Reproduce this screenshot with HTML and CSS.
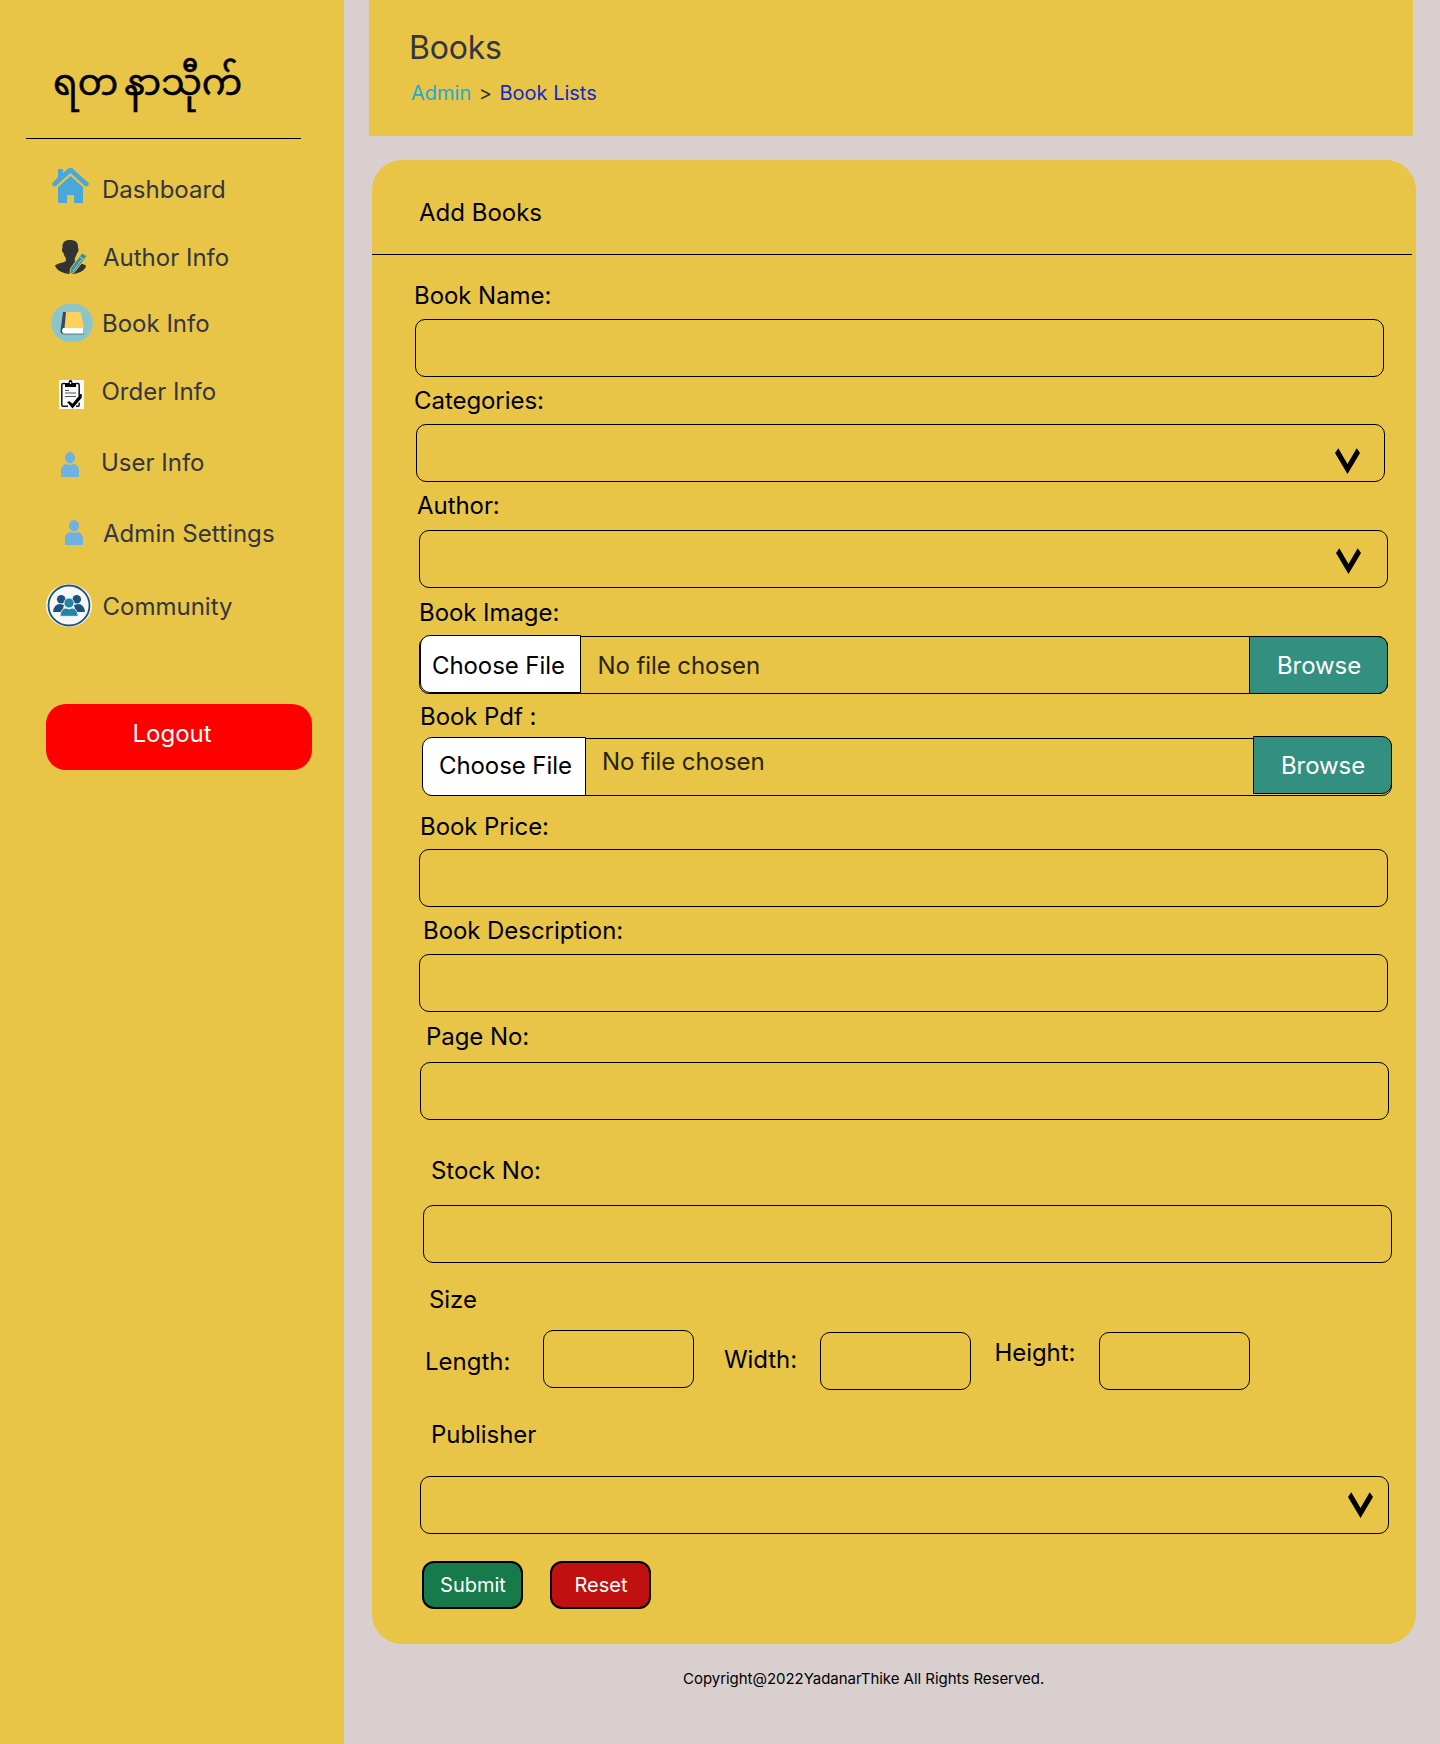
FILE: index.html
```html
<!DOCTYPE html>
<html lang="en">
<head>
<meta charset="utf-8">
<title>Add Books</title>
<link rel="stylesheet" href="styles.css">
</head>
<body>
<div class="page">
  <aside class="sidebar">
    <div class="logo" lang="my"><span>ရတ</span><span>နာသီုက်</span></div>
    <nav class="nav">
      <a class="nav-item dashboard"><svg class="icon" width="37" height="36" viewBox="0 0 37 36"><path fill="#4aa7dc" d="M6 9V2Q6 1 7 1h3q1 0 1 1v3l6-5q1.500-1 3 0l16.500 15q1 1.500-.5 2.500-1.500 1.500-3 .5L18.500 5 4 18q-1.500 1-3-.5-1.500-1-.5-2.500z"/><path fill="#4aa7dc" d="M18.500 8 31 19v15q0 1-1 1h-8v-8h-7v8H7q-1 0-1-1V19z"/></svg><span>Dashboard</span></a>
      <a class="nav-item author"><svg class="icon" width="32" height="34" viewBox="0 0 32 34"><path fill="#333" d="M15 0c6 0 8.500 3 8 8 1 1 .5 4-1 5-.5 2-1.200 4-2.200 5v3c3 2 8 2.500 11.200 4.500 0 4-6 8.500-15 8.500S1 29.500 0 25.500C3 23 8 23 10.800 21v-3c-1-1-1.800-3-2.300-5-1.500-1-2-4-1-5-.5-5 1.500-8 7.500-8z"/><path fill="#2a93b5" stroke="#e8c547" stroke-width="1" d="m27 13 5 3-12 15.500-5 3 .5-6z"/><path stroke="#e8c547" stroke-width="1" fill="none" d="m24.500 16.500 5 3.200M27 19 18 31"/></svg><span>Author Info</span></a>
      <a class="nav-item book"><svg class="icon" width="42" height="38" viewBox="0 0 42 38"><rect width="42" height="38" rx="19" fill="#8bc5cc"/><path fill="#334a5e" d="M12 8h4l-1.500 15L13 30h-2q-1.500-1-1.500-3z"/><path fill="#ffd05b" d="M15 8h13q2 0 2.200 1.500L33 24H13.500z"/><path fill="#fff" d="M12 24h20v6H12q-2-3 0-6z"/><path stroke="#334a5e" stroke-width=".7" fill="none" d="M11 24q-2 3 1 6h21"/></svg><span>Book Info</span></a>
      <a class="nav-item order"><svg class="icon" width="25" height="29" viewBox="0 0 25 29"><path fill="#fafafa" d="M0 0h25v29H0z"/><path fill="none" stroke="#111" stroke-width="1.500" d="M6 3.500H4Q2.800 3.500 2.800 5v20q0 1.300 1.200 1.300h5M17 3.500h2q1.200 0 1.200 1.500v11M17 26.300h2q1.200 0 1.200-1.500v-2"/><path fill="#000" d="M6 3h3.500q.2-3 2-3t2 3H17v4H6z"/><circle cx="11.500" cy="3" r=".9" fill="#fff"/><path stroke="#555" d="M6 10.500h4M6 13h11M6 16.500h11" fill="none"/><path fill="#000" d="m8 22 2.500-.8 3 2.500L21.500 14l1.500.5-.5 3.500-9 10.500z"/></svg><span>Order Info</span></a>
      <a class="nav-item user"><svg class="icon" width="18" height="25" viewBox="0 0 18 25"><ellipse cx="9" cy="5.700" rx="5" ry="5.700" fill="#6fb1e1"/><path fill="#6fb1e1" d="M0 25v-6c0-4 2.500-7 5.500-7q3.500 1.700 7 0c3 0 5.500 3 5.500 7v6z"/></svg><span>User Info</span></a>
      <a class="nav-item admin"><svg class="icon" width="18" height="25" viewBox="0 0 18 25"><ellipse cx="9" cy="5.700" rx="5" ry="5.700" fill="#6fb1e1"/><path fill="#6fb1e1" d="M0 25v-6c0-4 2.500-7 5.500-7q3.500 1.700 7 0c3 0 5.500 3 5.500 7v6z"/></svg><span>Admin Settings</span></a>
      <a class="nav-item community"><svg class="icon" width="46" height="43" viewBox="0 0 46 43"><ellipse cx="23" cy="21.500" rx="23" ry="21.500" fill="#f7f7f7"/><ellipse cx="23" cy="21.500" rx="20.500" ry="20" fill="none" stroke="#1b5478" stroke-width="1.800"/><g fill="#1b5478"><circle cx="15.200" cy="15.200" r="4.300"/><circle cx="30.800" cy="15.200" r="4.300"/><path d="M7 28q1-8 7-8l4 1-2 7zM39 28q-1-8-7-8l-4 1 2 7z"/></g><g fill="#2484a8" stroke="#f7f7f7" stroke-width=".8"><path d="M14 32.300q1-8.300 6-8.300 3 2 6 0 5 0 6.300 8.300z"/><circle cx="23" cy="19" r="5"/></g></svg><span>Community</span></a>
    </nav>
    <button class="logout">Logout</button>
  </aside>
  <main class="main">
    <header class="header">
      <h1>Books</h1>
      <div class="crumbs"><a class="crumb-admin">Admin</a><span>&gt;</span><a class="crumb-list">Book Lists</a></div>
    </header>
    <section class="card">
      <h2>Add Books</h2>
      <form class="form">
        <div class="field name"><label>Book Name:</label><div class="box"></div></div>
        <div class="field categories"><label>Categories:</label><div class="box"><svg class="chevron" width="25" height="26" viewBox="0 0 25 26"><path d="M3.300.3 12.500 16 21.700.3 25 5 12.500 26 0 5z"/></svg></div></div>
        <div class="field writer"><label>Author:</label><div class="box"><svg class="chevron" width="25" height="26" viewBox="0 0 25 26"><path d="M3.300.3 12.500 16 21.700.3 25 5 12.500 26 0 5z"/></svg></div></div>
        <div class="field image"><label>Book Image:</label><div class="box file"><span class="choose">Choose File</span><span class="status">No file chosen</span><span class="browse">Browse</span></div></div>
        <div class="field pdf"><label>Book Pdf :</label><div class="box file"><span class="choose">Choose File</span><span class="status">No file chosen</span><span class="browse">Browse</span></div></div>
        <div class="field price"><label>Book Price:</label><div class="box"></div></div>
        <div class="field description"><label>Book Description:</label><div class="box"></div></div>
        <div class="field pages"><label>Page No:</label><div class="box"></div></div>
        <div class="field stock"><label>Stock No:</label><div class="box"></div></div>
        <div class="field size"><label>Size</label>
          <div class="sizes">
            <label class="length">Length:</label><div class="box first"></div>
            <label class="width">Width:</label><div class="box"></div>
            <label class="height">Height:</label><div class="box"></div>
          </div>
        </div>
        <div class="field publisher"><label>Publisher</label><div class="box"><svg class="chevron" width="25" height="26" viewBox="0 0 25 26"><path d="M3.300.3 12.500 16 21.700.3 25 5 12.500 26 0 5z"/></svg></div></div>
        <div class="actions"><button class="submit" type="button">Submit</button><button class="reset" type="button">Reset</button></div>
      </form>
    </section>
    <footer class="footer">Copyright@2022YadanarThike All Rights Reserved.</footer>
  </main>
</div>
</body>
</html>
```
FILE: styles.css
```css
* { box-sizing: border-box; }
body {
  margin: 0;
  background: #dacfcf;
  color: #000;
  font: 24px/29px Inter, "Liberation Sans", sans-serif;
}
.page { display: flex; height: 1744px; }
button { font: inherit; padding: 0; }

/* Sidebar */
.sidebar { flex: none; width: 344px; background: #e8c547; }
.logo {
  display: flex;
  gap: 6px;
  height: 139px;
  margin: 0 43px 0 26px;
  padding: 52px 0 0 27px;
  border-bottom: 1px solid #000;
  font: 36px/70px "Noto Sans Myanmar", Padauk, "Myanmar Text", sans-serif;
  -webkit-text-stroke: .5px #000;
  white-space: nowrap;
}
.nav { padding: 26px 0 0 46px; color: #33363f; }
.nav-item { display: grid; grid-template-columns: 55px 1fr; align-items: start; height: 68px; }
.nav-item span { margin-top: 10px; }
.icon { display: block; }
.dashboard .icon { margin: 3px 0 0 6px; }
.dashboard span { margin-left: 1px; }
.author { height: 66px; }
.author .icon { margin: 7px 0 0 9px; }
.author span { margin-left: 2px; }
.book .icon { margin: 5px 0 0 5px; }
.book span { margin-left: 1px; }
.order { height: 71px; }
.order .icon { margin: 13px 0 0 13px; }
.order span { margin-left: .5px; }
.user { height: 71px; }
.user .icon { margin: 14px 0 0 15px; }
.admin { height: 73px; }
.admin .icon { margin: 11px 0 0 19px; }
.admin span { margin-left: 2px; letter-spacing: .05px; }
.community { height: 122px; }
.community .icon { margin: 2px 0 0; }
.community span { margin-left: 1.500px; }
.logout {
  display: block;
  width: 266px;
  height: 66px;
  margin-left: 46px;
  padding: 0 0 7px 86.500px;
  border: 0;
  border-radius: 20px;
  background: #f00;
  color: #fff;
  text-align: left;
}

/* Main column */
.main { flex: 1; padding: 0 24px 0 25px; }
.header { width: 1044px; height: 136px; padding: 28px 0 0 40px; background: #e8c547; color: #33363f; }
h1 { margin: 0; font-size: 32px; font-weight: 400; line-height: 39px; letter-spacing: -.2px; }
.crumbs { display: flex; gap: 7.500px; padding: 14px 0 0 2px; font-size: 20px; line-height: 24px; }
.crumb-admin { color: #20acd2; }
.crumb-list { color: #1228d4; }
.card { width: 1044px; height: 1484px; margin: 24px 0 0 3px; border-radius: 30px; background: #e8c547; }
h2 {
  width: 1040px;
  height: 95px;
  margin: 0;
  padding: 38px 0 0 47px;
  border-bottom: 1px solid #000;
  font-size: 24px;
  font-weight: 400;
}
.form { padding: 26px 0 0 42px; }
.field { margin-top: 9px; }
.field label { display: block; width: max-content; letter-spacing: -.06px; }
.box { width: 969px; height: 58px; margin-top: 9px; border: 1px solid #000; border-radius: 10px; }
.chevron { display: block; margin: 23px 24px 0 auto; }
.name { margin: 0 0 0 1px; }
.name label { margin-left: -1px; }
.categories { margin-left: 2px; }
.categories label { margin-left: -2px; }
.writer { margin-left: 5px; }
.writer label { margin-left: -2px; }
.writer .box { margin-top: 10px; }
.writer .chevron { margin: 17px 26px 0 auto; }
.image { margin: 10px 0 0 5px; }
.pdf { margin: 8px 0 0 9px; }
.pdf label { margin-left: -3px; }
.pdf .box { margin-top: 7px; }

.file { display: flex; }
.file span { letter-spacing: -.08px; }
.choose { width: 161px; height: 58px; margin: -2px 0 0; padding: 15px 0 0 11px; border: 1px solid #000; border-radius: 10px 0 0 10px; background: #fff; }
.status { flex: 1; padding: 14px 0 0 16.500px; color: #28230f; }
.browse { width: 139px; height: 58px; margin: -1px -1px 0 0; padding: 14px 0 0 27px; border: 1px solid #000; border-radius: 0 10px 10px 0; background: #338f7f; color: #fff; }
.pdf .choose { width: 164px; height: 59px; margin-left: -2px; padding: 13px 0 0 16px; }
.pdf .status { padding: 8px 0 0 16px; }
.pdf .browse { margin-top: -3px; }

.price { margin: 16px 0 0 5px; }
.price label { margin-left: 1px; }
.price .box { margin-top: 8px; }
.description { margin-left: 5px; }
.description label { margin-left: 4px; }
.pages { margin: 10px 0 0 6px; }
.pages label { margin-left: 6px; }
.pages .box { margin-top: 11px; }
.stock { margin: 36px 0 0 9px; }
.stock label { margin-left: 8px; }
.stock .box { margin-top: 20px; }
.size { margin: 22px 0 0 11px; }
.size > label { margin-left: 4px; }
.sizes { display: grid; grid-template-columns: 118px 151px 126px 151px 128px 151px; align-items: start; height: 60px; margin-top: 16px; }
.sizes .box { width: 151px; margin-top: 2px; }
.sizes .first { margin-top: 0; }
.sizes .length { margin-top: 17px; letter-spacing: 0; }
.sizes .width { margin: 15px 0 0 30px; }
.sizes .height { margin: 8px 0 0 23.500px; }
.publisher { margin: 30px 0 0 6px; }
.publisher label { margin-left: 11px; }
.publisher .box { margin-top: 27px; }
.publisher .chevron { margin: 15px 15px 0 auto; }
.actions { display: flex; gap: 27px; margin: 27px 0 0 8px; }
.actions button { width: 101px; height: 48px; padding-left: 1px; border: 2px solid #000; border-radius: 12px; color: #fff; font-size: 20px; line-height: 24px; }
.submit { background: #167a4a; }
.reset { background: #c01010; }
.footer { padding: 26px 0 0 314px; font-size: 15px; line-height: 18px; letter-spacing: -.03px; }
```
